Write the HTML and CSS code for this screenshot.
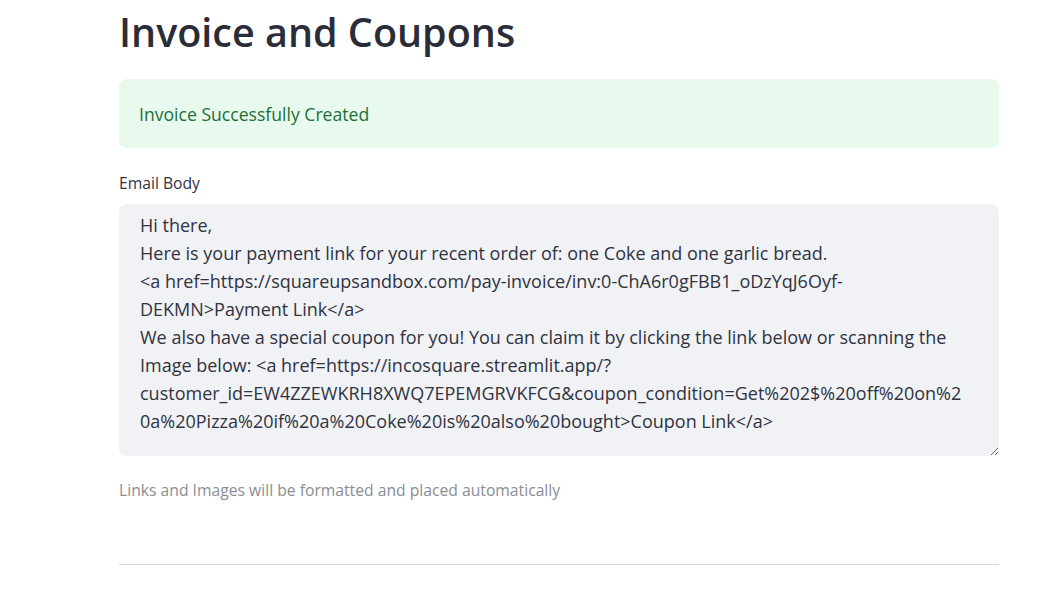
FILE: index.html
```html
<!DOCTYPE html>
<html lang="en">
<head>
<meta charset="utf-8">
<title>Invoice and Coupons</title>
<link rel="stylesheet" href="styles.css">
</head>
<body>
<main class="main">
  <h1 class="title">Invoice and Coupons</h1>
  <div class="alert-success">Invoice Successfully Created</div>
  <div class="field">
    <label class="field-label" for="email-body">Email Body</label>
    <textarea id="email-body" class="field-input" wrap="off" spellcheck="false">Hi there,
Here is your payment link for your recent order of: one Coke and one garlic bread.
&lt;a href=https://squareupsandbox.com/pay-invoice/inv:0-ChA6r0gFBB1_oDzYqJ6Oyf-
DEKMN&gt;Payment Link&lt;/a&gt;
We also have a special coupon for you! You can claim it by clicking the link below or scanning the
Image below: &lt;a href=https://incosquare.streamlit.app/?
customer_id=EW4ZZEWKRH8XWQ7EPEMGRVKFCG&amp;coupon_condition=Get%202$%20off%20on%2
0a%20Pizza%20if%20a%20Coke%20is%20also%20bought&gt;Coupon Link&lt;/a&gt;</textarea>
  </div>
  <p class="caption">Links and Images will be formatted and placed automatically</p>
  <hr class="divider">
</main>
</body>
</html>
```

FILE: styles.css
```css
html, body {
  margin: 0;
  padding: 0;
  background: #ffffff;
}
body {
  font-family: "Open Sans", "Source Sans Pro", "Liberation Sans", sans-serif;
  color: #31333f;
  overflow: hidden;
}
.main {
  width: 880px;
  margin-left: 119px;
  display: flex;
  flex-direction: column;
}
.title {
  margin: 0;
  padding: 0;
  font-size: 39.5px;
  font-weight: 600;
  line-height: 64px;
  color: #2a2c38;
}
.alert-success {
  margin-top: 15px;
  height: 69px;
  box-sizing: border-box;
  padding: 0 20px;
  display: flex;
  align-items: center;
  background: #e8f9ee;
  color: #1d6f37;
  border-radius: 8px;
  font-size: 17.6px;
}
.field {
  margin-top: 25px;
  display: flex;
  flex-direction: column;
}
.field-label {
  font-size: 15.7px;
  line-height: 20px;
  color: #31333f;
  margin-bottom: 11px;
}
.field-input {
  box-sizing: border-box;
  width: 880px;
  height: 252px;
  margin: 0;
  border: none;
  outline: none;
  border-radius: 8px;
  background: #f0f2f6;
  color: #31333f;
  font-family: inherit;
  font-size: 18px;
  line-height: 28px;
  padding: 7px 21px;
  resize: vertical;
  overflow: hidden;
  white-space: pre;
}
.caption {
  margin: 23px 0 0;
  font-size: 15.7px;
  line-height: 22px;
  color: #8b8d94;
}
.divider {
  margin: 63px 0 0;
  border: none;
  border-top: 1px solid #d6d6d9;
  height: 0;
}
```
